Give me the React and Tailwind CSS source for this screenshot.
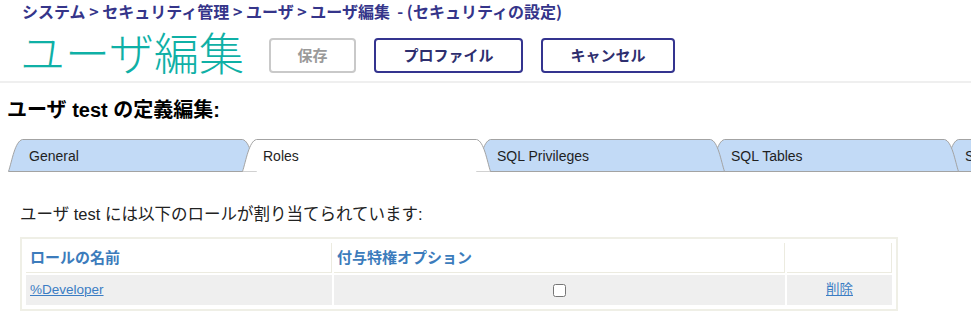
import React from 'react';

const tabs = ['General', 'Roles', 'SQL Privileges', 'SQL Tables', 'SQL Views'];

const Tab = ({ label, active, z }) => (
    <div className="relative -mr-[15px] h-[33px] w-[249px] shrink-0" style={{ zIndex: z }}>
        <svg className="absolute inset-0" width="249" height="33" viewBox="0 0 249 33">
            <path
                d="M0.5,32.5 C4,22 7,2 14.5,0.5 L234.5,0.5 C242,2 245,22 248.5,32.5 Z"
                fill={active ? '#ffffff' : '#c2daf6'}
                stroke="none"
            />
            <path
                d={active
                    ? 'M0.5,32.5 C4,22 7,2 14.5,0.5 L234.5,0.5 C242,2 245,22 248.5,32.5'
                    : 'M0.5,32.5 C4,22 7,2 14.5,0.5 L234.5,0.5 C242,2 245,22 248.5,32.5 Z'}
                fill="none"
                stroke="#a3a3a3"
                strokeWidth="1"
            />
        </svg>
        <span className="relative block pl-[21px] pt-[8px] text-[14px] leading-[18px] text-[#1f1f1f]">{label}</span>
    </div>
);

const App = () => {
    return (
        <div className="h-[330px] w-[971px] overflow-hidden bg-white font-['Liberation_Sans','Noto_Sans_CJK_JP',sans-serif]">
            <div className="border-b-2 border-[#efefef] pb-[4px]">
                <div className="pl-[22px] pt-[2px] text-[16px] font-bold leading-[18px] text-[#35358a] font-['Noto_Sans_CJK_JP',sans-serif]">
                    システム &gt; セキュリティ管理 &gt; ユーザ &gt; ユーザ編集&nbsp;&nbsp;- (セキュリティの設定)
                </div>
                <div className="mt-[7px] flex items-start pl-[20px]">
                    <h1 className="text-[45px] font-light leading-[50px] text-[#0fb0a6] font-['Noto_Sans_CJK_JP',sans-serif]">ユーザ編集</h1>
                    <div className="ml-[25px] mt-[11px] flex gap-[18px] font-['Noto_Sans_CJK_JP',sans-serif]">
                        <button className="h-[35px] w-[87px] rounded-[4px] border-2 border-[#c9c9c9] text-[15px] font-bold text-[#9a9a9a]">保存</button>
                        <button className="h-[35px] w-[149px] rounded-[4px] border-2 border-[#34348f] text-[15px] font-bold text-[#2e2e6e]">プロファイル</button>
                        <button className="h-[35px] w-[134px] rounded-[4px] border-2 border-[#34348f] text-[15px] font-bold text-[#2e2e6e]">キャンセル</button>
                    </div>
                </div>
            </div>

            <h2 className="mt-[15px] pl-[7px] text-[20px] font-bold leading-[24px] text-black">ユーザ test の定義編集:</h2>

            <div className="mt-[17px] flex pl-[8px]">
                {tabs.map((t, i) => (
                    <Tab key={t} label={t} active={t === 'Roles'} z={t === 'Roles' ? 20 : 10 - i} />
                ))}
            </div>

            <p className="mt-[32px] pl-[20px] text-[16.5px] leading-[20px] text-[#222]">ユーザ test には以下のロールが割り当てられています:</p>

            <div className="ml-[20px] mt-[13px] w-[878px] border-2 border-[#efefe6] p-[4px]">
                <div className="grid grid-cols-[306px_451px_1fr] gap-[2px]">
                    <div className="flex h-[30px] items-center border-b border-r border-[#ecebe0] pl-[4px] text-[15px] font-bold text-[#3c7cbc] font-['Noto_Sans_CJK_JP',sans-serif]">ロールの名前</div>
                    <div className="flex h-[30px] items-center border-b border-r border-[#ecebe0] pl-[3px] text-[15px] font-bold text-[#3c7cbc] font-['Noto_Sans_CJK_JP',sans-serif]">付与特権オプション</div>
                    <div className="h-[30px] border-b border-r border-[#ecebe0]"></div>
                    <div className="flex h-[30px] items-center bg-[#efefef] pl-[4px] text-[13.5px]">
                        <a href="#" className="text-[#3b7dc4] underline">%Developer</a>
                    </div>
                    <div className="flex h-[30px] items-center justify-center bg-[#efefef]">
                        <input type="checkbox" className="h-[13px] w-[13px]" />
                    </div>
                    <div className="flex h-[30px] items-center justify-center bg-[#efefef] text-[13.5px]">
                        <a href="#" className="text-[#3b7dc4] underline">削除</a>
                    </div>
                </div>
            </div>
        </div>
    );
};

export default App;
